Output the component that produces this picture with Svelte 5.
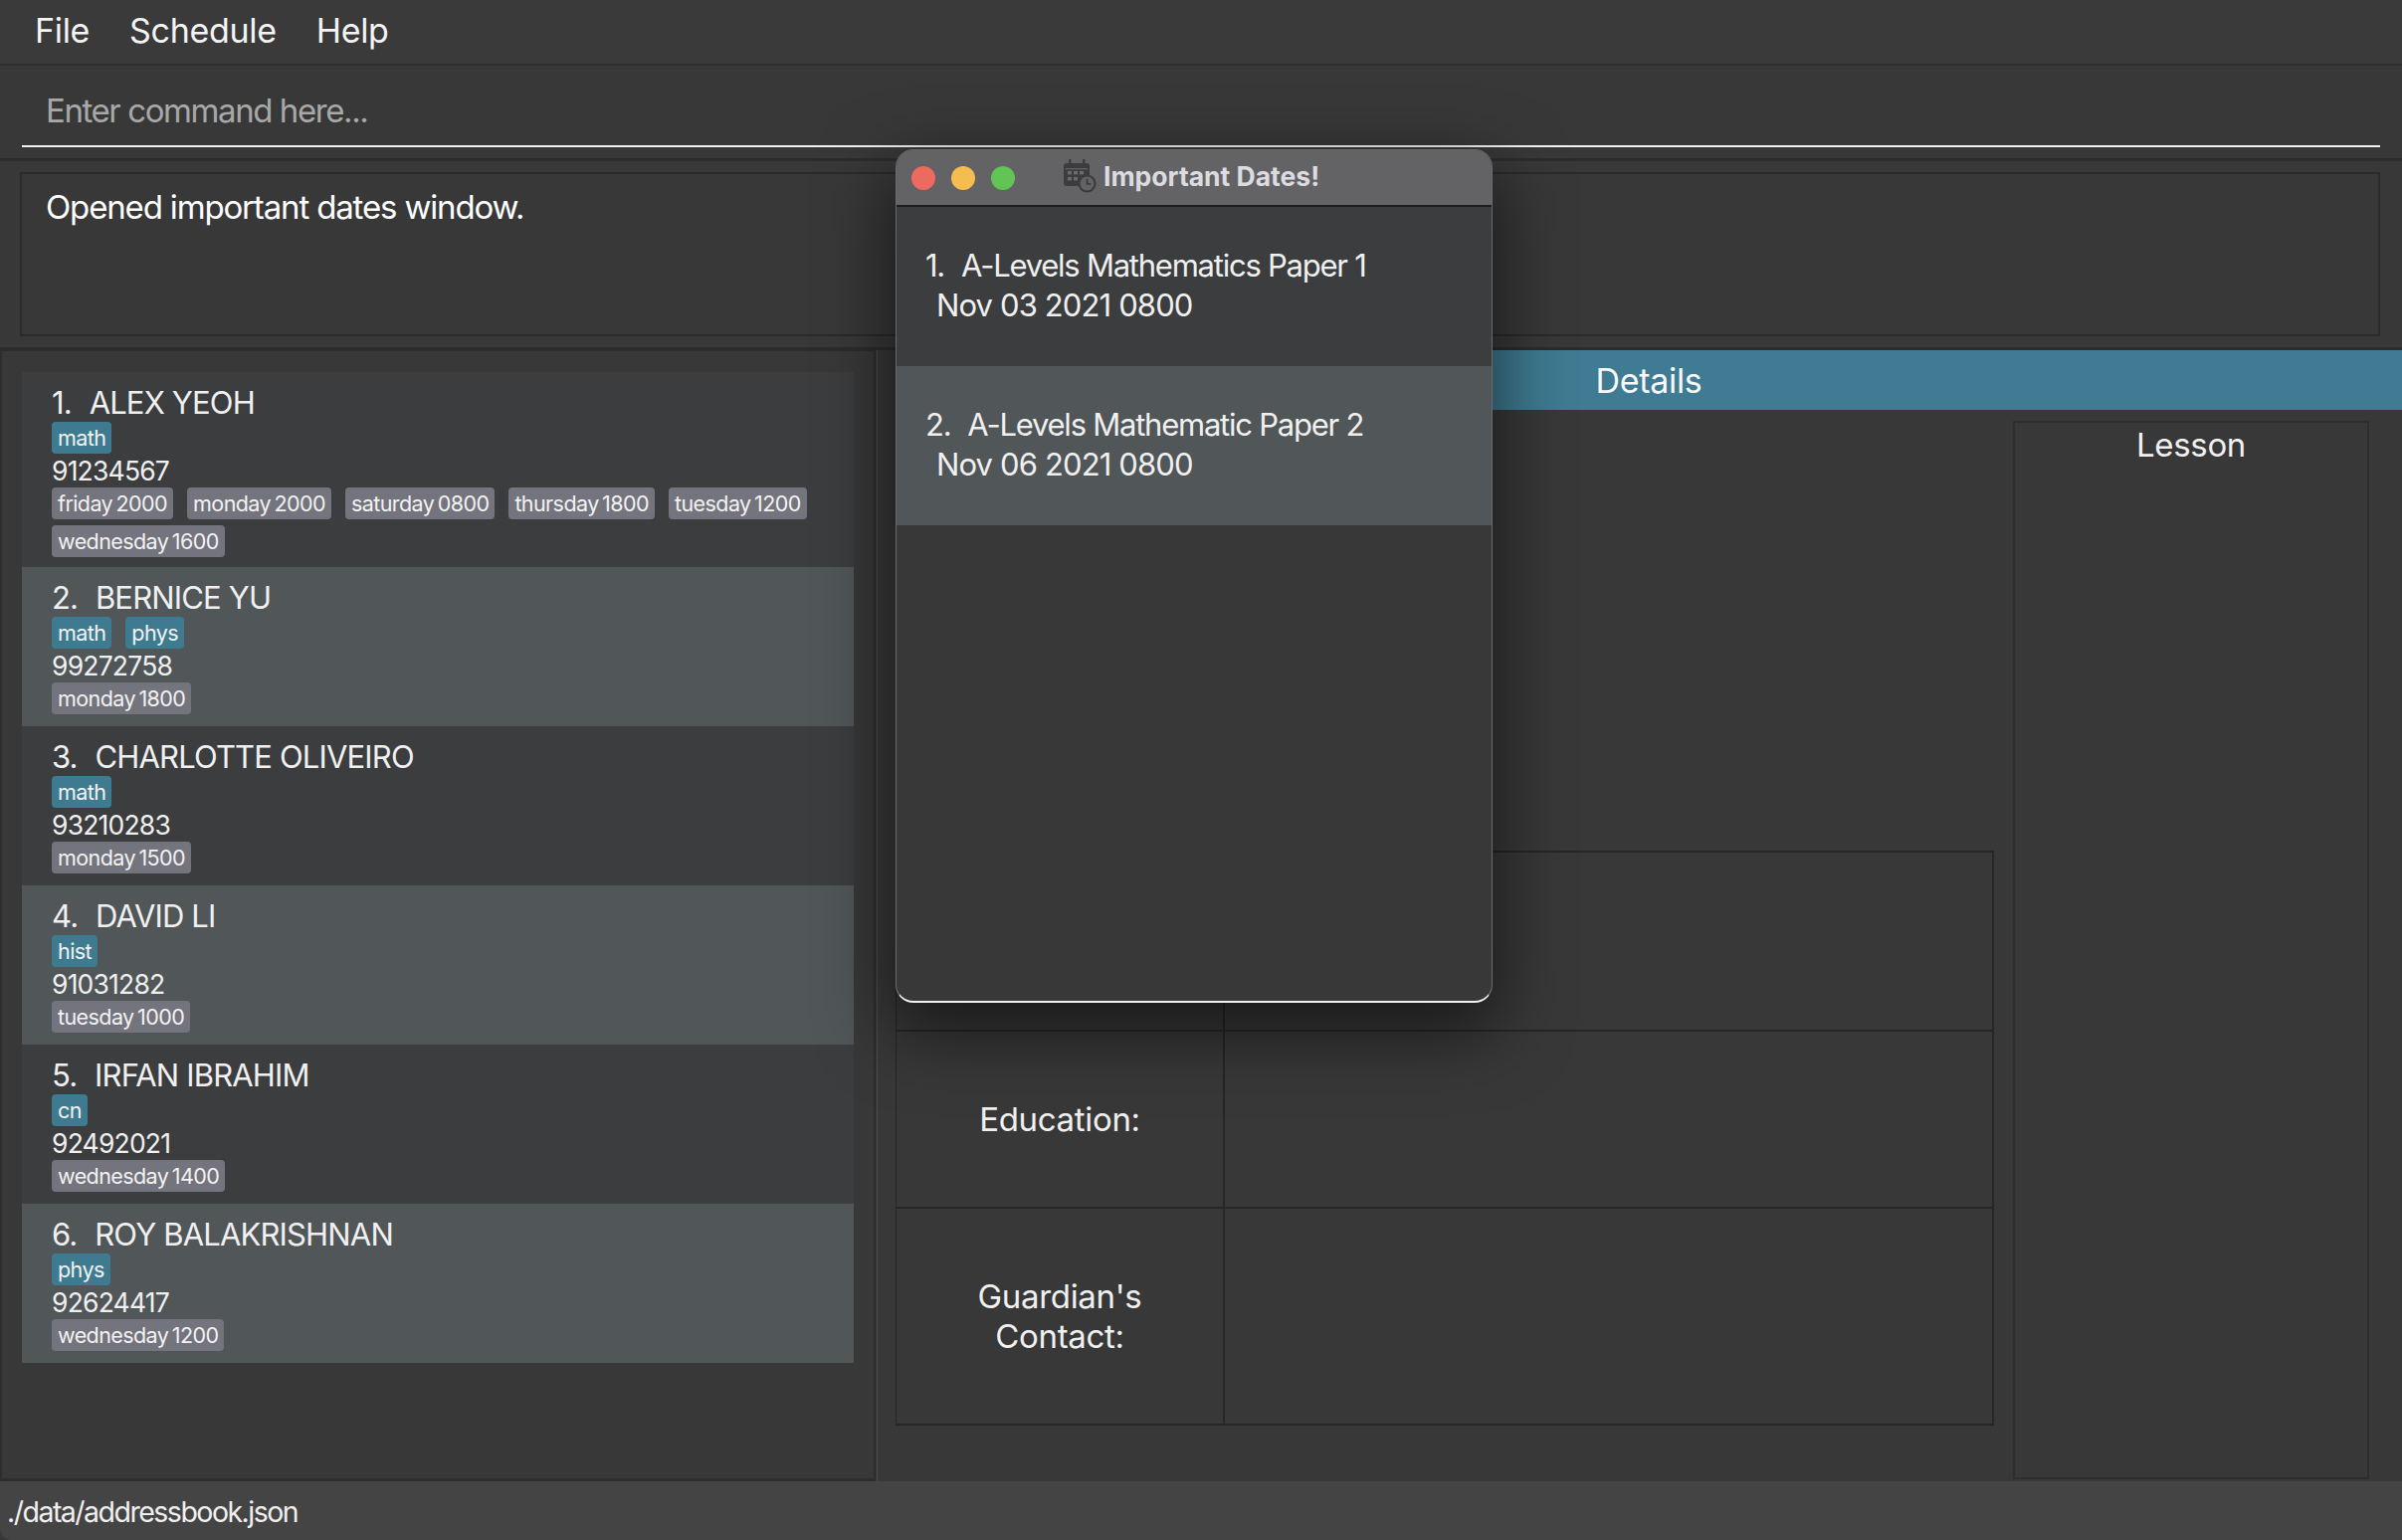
<script>
  // student list shown on the left panel
  const students = [
    { name: 'ALEX YEOH', tags: ['math'], phone: '91234567', slots: ['friday 2000', 'monday 2000', 'saturday 0800', 'thursday 1800', 'tuesday 1200', 'wednesday 1600'] },
    { name: 'BERNICE YU', tags: ['math', 'phys'], phone: '99272758', slots: ['monday 1800'] },
    { name: 'CHARLOTTE OLIVEIRO', tags: ['math'], phone: '93210283', slots: ['monday 1500'] },
    { name: 'DAVID LI', tags: ['hist'], phone: '91031282', slots: ['tuesday 1000'] },
    { name: 'IRFAN IBRAHIM', tags: ['cn'], phone: '92492021', slots: ['wednesday 1400'] },
    { name: 'ROY BALAKRISHNAN', tags: ['phys'], phone: '92624417', slots: ['wednesday 1200'] }
  ];

  const dates = [
    { title: 'A-Levels Mathematics Paper 1', when: 'Nov 03 2021 0800' },
    { title: 'A-Levels Mathematic Paper 2', when: 'Nov 06 2021 0800' }
  ];
</script>

<div class="window">
  <nav class="menu">
    <span>File</span>
    <span>Schedule</span>
    <span>Help</span>
  </nav>

  <div class="command">
    <div class="command-input">Enter command here...</div>
  </div>

  <div class="result">
    <div class="result-box">Opened important dates window.</div>
  </div>

  <div class="main">
    <section class="list">
      {#each students as s, i}
        <article class="card" class:alt={i % 2 === 1}>
          <div class="name"><span class="num">{i + 1}.&nbsp;</span> {s.name}</div>
          <div class="tags">
            {#each s.tags as t}<span class="tag subject">{t}</span>{/each}
          </div>
          <div class="phone">{s.phone}</div>
          <div class="tags slots">
            {#each s.slots as t}<span class="tag">{t}</span>{/each}
          </div>
        </article>
      {/each}
    </section>

    <section class="details">
      <header class="details-head">Details</header>
      <div class="details-body">
        <div class="left-col">
          <div class="table">
            <div class="cell head row-a"></div>
            <div class="cell row-a"></div>
            <div class="cell head row-b">Education:</div>
            <div class="cell row-b"></div>
            <div class="cell head row-c">Guardian's<br />Contact:</div>
            <div class="cell row-c"></div>
          </div>
        </div>
        <aside class="lesson">Lesson</aside>
      </div>
    </section>
  </div>

  <footer class="status">./data/addressbook.json</footer>

  <div class="popup">
    <div class="titlebar">
      <i class="light red"></i>
      <i class="light yellow"></i>
      <i class="light green"></i>
      <div class="title">
        <svg width="34" height="34" viewBox="0 0 34 34" aria-hidden="true">
          <rect x="1" y="4" width="26" height="23" rx="3" fill="#3c3c3e" />
          <rect x="6" y="0" width="2.4" height="7" fill="#3c3c3e" />
          <rect x="20" y="0" width="2.4" height="7" fill="#3c3c3e" />
          <rect x="3" y="9" width="22" height="1.4" fill="#5f5f61" />
          <g fill="#6a6a6c">
            <rect x="5" y="12" width="4" height="3.4" />
            <rect x="11" y="12" width="4" height="3.4" />
            <rect x="17" y="12" width="4" height="3.4" />
            <rect x="5" y="18" width="4" height="3.4" />
            <rect x="11" y="18" width="4" height="3.4" />
          </g>
          <circle cx="24.5" cy="24.5" r="8" fill="#636365" stroke="#3c3c3e" stroke-width="2.2" />
          <path d="M24.5 19.8v5h4" fill="none" stroke="#3c3c3e" stroke-width="1.8" />
        </svg>
        <span>Important Dates!</span>
      </div>
    </div>
    {#each dates as d, i}
      <div class="date" class:alt={i % 2 === 1}>
        <div class="what"><span class="num">{i + 1}.&nbsp;</span> {d.title}</div>
        <div class="when">{d.when}</div>
      </div>
    {/each}
  </div>
</div>

<style>
  :global(body) {
    margin: 0;
    background: #383838;
  }

  .window {
    position: relative;
    width: 2414px;
    height: 1548px;
    display: flex;
    flex-direction: column;
    overflow: hidden;
    background: #383838;
    color: #f0f0f0;
    font-family: Inter, "Liberation Sans", sans-serif;
    letter-spacing: -0.02em;
  }

  .menu {
    height: 66px;
    flex: none;
    box-sizing: border-box;
    padding: 0 0 3px 35px;
    display: flex;
    align-items: center;
    gap: 40px;
    background: #3a3a3a;
    border-bottom: 2px solid #2d2d2d;
    font-size: 34px;
    color: #f4f4f4;
  }

  .command {
    height: 96px;
    flex: none;
    padding: 0 22px 11px;
    box-sizing: border-box;
    display: flex;
    border-bottom: 3px solid #2c2c2c;
  }

  .command-input {
    flex: 1;
    display: flex;
    align-items: center;
    padding: 10px 0 0 24px;
    border-bottom: 2px solid #f2f2f2;
    font-size: 33px;
    letter-spacing: -0.043em;
    color: #a8a8a8;
  }

  .result {
    height: 190px;
    flex: none;
    box-sizing: border-box;
    padding: 11px 22px 11px 20px;
    border-bottom: 3px solid #2c2c2c;
  }

  .result-box {
    height: 100%;
    box-sizing: border-box;
    padding: 13px 24px;
    border: 2px solid #2a2a2a;
    font-size: 33px;
    line-height: 40px;
    letter-spacing: -0.035em;
    color: #fff;
  }

  .main {
    flex: 1;
    min-height: 0;
    display: flex;
  }

  .list {
    width: 880px;
    flex: none;
    box-sizing: border-box;
    padding: 21px 20px 0 20px;
    border: 2px solid #2d2d2d;
    border-top-width: 1px;
    border-left-width: 2px;
    border-bottom-width: 3px;
  }

  .card {
    height: 160px;
    box-sizing: border-box;
    padding: 13px 30px 0;
    background: #3c3d3f;
  }

  .card:first-child {
    height: 196px;
  }

  .card.alt {
    background: #515659;
  }

  .name {
    height: 37px;
    line-height: 36px;
    font-size: 31px;
    letter-spacing: -0.027em;
  }

  .num {
    margin-right: 2px;
  }

  .phone {
    height: 34px;
    line-height: 34px;
    font-size: 26.5px;
    letter-spacing: -0.03em;
  }

  .tags {
    display: flex;
    flex-wrap: wrap;
    gap: 6px 14px;
  }

  .tag {
    height: 32px;
    line-height: 32px;
    padding: 0 6px;
    border-radius: 4px;
    background: #74747e;
    color: #f2f2f2;
    font-size: 21.5px;
    letter-spacing: -0.027em;
    word-spacing: -2px;
  }

  .tag.subject {
    background: #3e7b91;
  }

  .details {
    flex: 1;
    min-width: 0;
    display: flex;
    flex-direction: column;
    border-left: 1px solid #4a4a4a;
    margin-left: 1px;
    padding-left: 18px;
  }

  .details-head {
    height: 60px;
    flex: none;
    display: flex;
    align-items: center;
    justify-content: center;
    background: #3f7b92;
    font-size: 34px;
    color: #f6f8f9;
  }

  .details-body {
    flex: 1;
    min-height: 0;
    display: flex;
    padding: 11px 33px 2px 0;
    gap: 19px;
  }

  .left-col {
    width: 1104px;
    flex: none;
    padding-top: 432px;
    box-sizing: border-box;
  }

  .table {
    display: grid;
    grid-template-columns: 330px 1fr;
    grid-template-rows: 180px 178px 216px;
    border: 2px solid #262626;
    border-width: 2px 2px 2px 1px;
  }

  .cell {
    display: flex;
    align-items: center;
    justify-content: center;
    text-align: center;
    font-size: 33px;
    line-height: 40px;
    border-bottom: 2px solid #262626;
  }

  .cell.head {
    border-right: 2px solid #262626;
  }

  .row-c {
    border-bottom: none;
  }

  .lesson {
    flex: 1;
    box-sizing: border-box;
    padding-top: 2px;
    text-align: center;
    border: 2px solid #2d2d2d;
    font-size: 33px;
    line-height: 40px;
  }

  .status {
    height: 59px;
    flex: none;
    box-sizing: border-box;
    padding: 2px 0 0 7px;
    display: flex;
    align-items: center;
    background: #444444;
    border-bottom-left-radius: 12px;
    font-size: 28.5px;
    letter-spacing: -0.053em;
  }

  .popup {
    position: absolute;
    left: 900px;
    top: 150px;
    width: 600px;
    height: 858px;
    box-sizing: border-box;
    border-radius: 18px;
    overflow: hidden;
    background: #383838;
    border: 1px solid #6a6a6a;
    border-bottom: 2px solid #f2f2f2;
    box-shadow: 0 24px 70px 6px rgba(0, 0, 0, 0.55);
  }

  .titlebar {
    position: relative;
    height: 55px;
    background: #636365;
    border-bottom: 2px solid #1d1d1d;
    display: flex;
    align-items: center;
    gap: 16px;
    padding: 0 0 0 15px;
  }

  .light {
    width: 24px;
    height: 24px;
    border-radius: 50%;
  }

  .red { background: #ee6a5f; }
  .yellow { background: #f5bd4f; }
  .green { background: #61c454; }

  .title {
    display: flex;
    align-items: center;
    gap: 7px;
    margin: -3px 0 0 32px;
    font-weight: 700;
    font-size: 26.5px;
    letter-spacing: 0;
    color: #dcdce0;
  }

  .date {
    height: 160px;
    box-sizing: border-box;
    padding: 39px 29px 0;
    background: #3c3d3f;
    font-size: 31px;
    line-height: 40px;
    color: #f0f0f0;
  }

  .date:first-of-type {
    height: 159px;
  }

  .date.alt {
    background: #515659;
  }

  .what {
    letter-spacing: -0.04em;
  }

  .when {
    padding-left: 11px;
    letter-spacing: -0.028em;
  }
</style>
